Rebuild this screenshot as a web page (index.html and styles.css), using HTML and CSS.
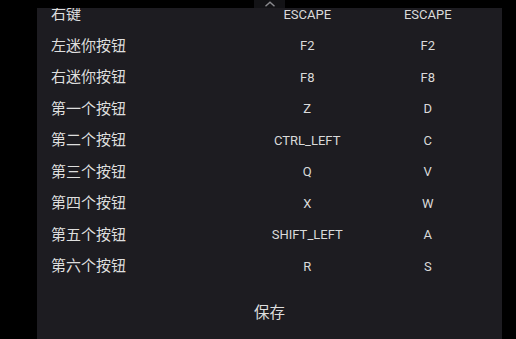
FILE: index.html
```html
<!DOCTYPE html>
<html lang="zh">
<head>
<meta charset="utf-8">
<link rel="stylesheet" href="styles.css">
</head>
<body>
<div class="sheet">
  <div class="handle">
    <svg width="12" height="6" viewBox="0 0 12 6"><path d="M1.5 5.2 L6 1.2 L10.5 5.2" fill="none" stroke="#8a8a8e" stroke-width="1.4"/></svg>
  </div>
  <div class="panel">
    <div class="list">
      <div class="row"><span class="name">右键</span><span class="key">ESCAPE</span><span class="key">ESCAPE</span></div>
      <div class="row"><span class="name">左迷你按钮</span><span class="key">F2</span><span class="key">F2</span></div>
      <div class="row"><span class="name">右迷你按钮</span><span class="key">F8</span><span class="key">F8</span></div>
      <div class="row"><span class="name">第一个按钮</span><span class="key">Z</span><span class="key">D</span></div>
      <div class="row"><span class="name">第二个按钮</span><span class="key">CTRL_LEFT</span><span class="key">C</span></div>
      <div class="row"><span class="name">第三个按钮</span><span class="key">Q</span><span class="key">V</span></div>
      <div class="row"><span class="name">第四个按钮</span><span class="key">X</span><span class="key">W</span></div>
      <div class="row"><span class="name">第五个按钮</span><span class="key">SHIFT_LEFT</span><span class="key">A</span></div>
      <div class="row"><span class="name">第六个按钮</span><span class="key">R</span><span class="key">S</span></div>
    </div>
    <div class="save">保存</div>
  </div>
</div>
</body>
</html>
```
FILE: styles.css
```css
html, body {
  margin: 0;
  padding: 0;
  height: 100%;
  background: #000;
  overflow: hidden;
}
body {
  font-family: Roboto, "Noto Sans CJK SC", sans-serif;
  color: #dcdcdc;
}
.sheet {
  margin-left: 37px;
  width: 465px;
  height: 100%;
  display: flex;
  flex-direction: column;
}
.handle {
  align-self: center;
  width: 31px;
  height: 8px;
  background: #131316;
  display: flex;
  justify-content: center;
  align-items: flex-start;
  padding-top: 1px;
  box-sizing: border-box;
}
.handle svg { display: block; }
.panel {
  flex: 1;
  background: #1d1c21;
  overflow: hidden;
  padding: 0 14px;
}
.list {
  margin-top: -9.75px;
}
.row {
  display: grid;
  grid-template-columns: 196px 1fr 1fr;
  align-items: center;
  height: 31.5px;
}
.name {
  font-family: "Noto Sans CJK SC", sans-serif;
  font-size: 15px;
  line-height: 20px;
  padding-bottom: 2px;
  color: #dedede;
}
.key {
  text-align: center;
  font-size: 13px;
  color: #dadada;
}
.save {
  font-family: "Noto Sans CJK SC", sans-serif;
  font-size: 15.5px;
  color: #dedede;
  text-align: center;
  margin-top: 17px;
  line-height: 24px;
}
```
